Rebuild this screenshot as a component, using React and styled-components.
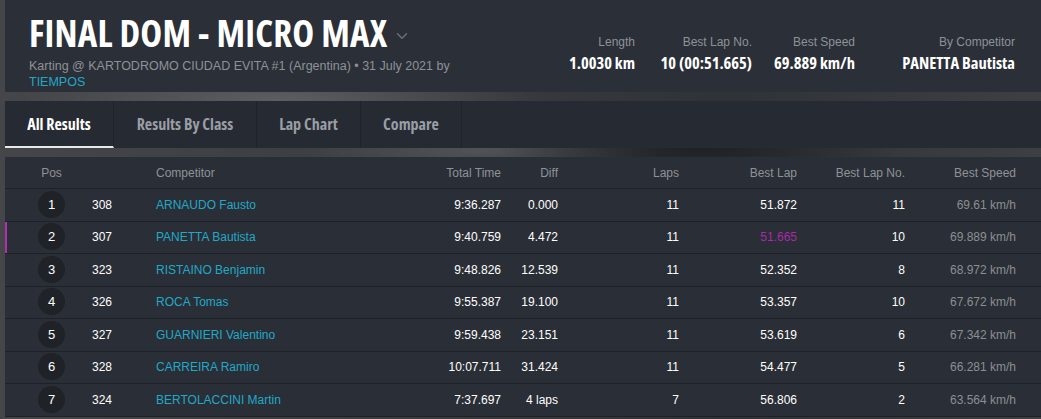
import React from 'react';
import styled, { createGlobalStyle } from 'styled-components';
import { ChevronDown } from 'lucide-react';

const GlobalStyle = createGlobalStyle`
  html, body {
    margin: 0;
    padding: 0;
  }
  body {
    font-family: "Liberation Sans", Arial, sans-serif;
    font-size: 12px;
    color: #fff;
    background-color: #3b3e43;
    background-image:
      radial-gradient(ellipse 260px 40px at 280px 100px, rgba(150, 150, 150, 0.35), transparent),
      radial-gradient(ellipse 200px 30px at 700px 150px, rgba(20, 22, 26, 0.6), transparent),
      radial-gradient(ellipse 180px 30px at 480px 150px, rgba(140, 140, 140, 0.3), transparent),
      linear-gradient(90deg, #44464a 0%, #3a3c40 40%, #2f3236 70%, #3d3f43 100%);
    overflow: hidden;
  }
`;

const Page = styled.div`
  padding-left: 5px;
  width: 1036px;
`;

const Header = styled.header`
  height: 92px;
  background: #2b2f37;
  display: flex;
  justify-content: space-between;
  padding: 0 26px 0 24px;
`;

const TitleBlock = styled.div`
  padding-top: 13px;
`;

const TitleRow = styled.div`
  display: flex;
  align-items: center;
  gap: 6px;
`;

const Title = styled.h1`
  margin: 0;
  font-family: "Open Sans", sans-serif;
  font-stretch: 75%;
  font-weight: 700;
  font-size: 37px;
  line-height: 40px;
  color: #fff;
  letter-spacing: 0.2px;
`;

const Subtitle = styled.div`
  margin-top: 5px;
  color: #8e9298;
  font-size: 12.5px;
  line-height: 16px;
`;

const Link = styled.a`
  color: #21a9c8;
  text-decoration: none;
`;

const Stats = styled.div`
  display: flex;
  padding-top: 35px;
`;

const Stat = styled.div`
  width: ${(p) => p.$w}px;
  text-align: right;
`;

const StatLabel = styled.div`
  color: #8e9298;
  font-size: 12px;
  line-height: 15px;
`;

const StatValue = styled.div`
  margin-top: 3px;
  font-family: "Open Sans", sans-serif;
  font-stretch: 75%;
  font-weight: 700;
  font-size: 16.5px;
  line-height: 20px;
  color: #fff;
`;

const Tabs = styled.nav`
  margin-top: 9px;
  height: 47px;
  background: #262a32;
  display: flex;
`;

const Tab = styled.div`
  width: ${(p) => p.$w}px;
  box-sizing: border-box;
  display: flex;
  align-items: center;
  justify-content: center;
  border-right: 1px solid #1f2228;
  border-bottom: 2px solid ${(p) => (p.$active ? '#e8e8e8' : 'transparent')};
  font-family: "Open Sans", sans-serif;
  font-stretch: 75%;
  font-weight: 700;
  font-size: 16px;
  color: ${(p) => (p.$active ? '#fff' : '#9a9ea5')};
`;

const Table = styled.div`
  margin-top: 9px;
  background: #2a2e36;
`;

const cols = '87px 64px 244px 101px 57px 121px 118px 108px 111px 25px';

const HeadRow = styled.div`
  display: grid;
  grid-template-columns: ${cols};
  height: 31px;
  align-items: center;
  color: #8e9298;
  border-bottom: 1px solid #1e2127;
`;

const Row = styled.div`
  display: grid;
  grid-template-columns: ${cols};
  height: 31.5px;
  align-items: center;
  border-bottom: 1px solid #1e2127;
  box-shadow: ${(p) => (p.$mark ? 'inset 2px 0 0 #b22fb2' : 'none')};
`;

const Cell = styled.div`
  text-align: ${(p) => (p.$right ? 'right' : 'left')};
  color: ${(p) => p.$color || 'inherit'};
  white-space: nowrap;
`;

const PosCell = styled.div`
  padding-left: 33px;
`;

const PosHead = styled.div`
  width: 27px;
  text-align: center;
`;

const PosBadge = styled.div`
  width: 27px;
  height: 27px;
  border-radius: 50%;
  background: #1f2227;
  display: flex;
  align-items: center;
  justify-content: center;
  font-size: 13px;
  margin-top: -1px;
`;

const results = [
  [1, '308', 'ARNAUDO Fausto', '9:36.287', '0.000', '11', '51.872', '11', '69.61 km/h'],
  [2, '307', 'PANETTA Bautista', '9:40.759', '4.472', '11', '51.665', '10', '69.889 km/h'],
  [3, '323', 'RISTAINO Benjamin', '9:48.826', '12.539', '11', '52.352', '8', '68.972 km/h'],
  [4, '326', 'ROCA Tomas', '9:55.387', '19.100', '11', '53.357', '10', '67.672 km/h'],
  [5, '327', 'GUARNIERI Valentino', '9:59.438', '23.151', '11', '53.619', '6', '67.342 km/h'],
  [6, '328', 'CARREIRA Ramiro', '10:07.711', '31.424', '11', '54.477', '5', '66.281 km/h'],
  [7, '324', 'BERTOLACCINI Martin', '7:37.697', '4 laps', '7', '56.806', '2', '63.564 km/h'],
];

export default function App() {
  return (
    <>
      <GlobalStyle />
      <Page>
        <Header>
          <TitleBlock>
            <TitleRow>
              <Title>FINAL DOM - MICRO MAX</Title>
              <ChevronDown size={18} color="#6b6f77" strokeWidth={2} style={{ marginTop: 6 }} />
            </TitleRow>
            <Subtitle>
              Karting @ KARTODROMO CIUDAD EVITA #1 (Argentina) • 31 July 2021 by
              <br />
              <Link>TIEMPOS</Link>
            </Subtitle>
          </TitleBlock>
          <Stats>
            <Stat $w={80}>
              <StatLabel>Length</StatLabel>
              <StatValue>1.0030 km</StatValue>
            </Stat>
            <Stat $w={117}>
              <StatLabel>Best Lap No.</StatLabel>
              <StatValue>10 (00:51.665)</StatValue>
            </Stat>
            <Stat $w={103}>
              <StatLabel>Best Speed</StatLabel>
              <StatValue>69.889 km/h</StatValue>
            </Stat>
            <Stat $w={160}>
              <StatLabel>By Competitor</StatLabel>
              <StatValue>PANETTA Bautista</StatValue>
            </Stat>
          </Stats>
        </Header>

        <Tabs>
          <Tab $w={109} $active>All Results</Tab>
          <Tab $w={143}>Results By Class</Tab>
          <Tab $w={104}>Lap Chart</Tab>
          <Tab $w={101}>Compare</Tab>
        </Tabs>

        <Table>
          <HeadRow>
            <PosCell>
              <PosHead>Pos</PosHead>
            </PosCell>
            <Cell />
            <Cell>Competitor</Cell>
            <Cell $right>Total Time</Cell>
            <Cell $right>Diff</Cell>
            <Cell $right>Laps</Cell>
            <Cell $right>Best Lap</Cell>
            <Cell $right>Best Lap No.</Cell>
            <Cell $right>Best Speed</Cell>
            <Cell />
          </HeadRow>
          {results.map(([pos, num, name, total, diff, laps, best, bestNo, speed]) => (
            <Row key={pos} $mark={pos === 2}>
              <PosCell>
                <PosBadge>{pos}</PosBadge>
              </PosCell>
              <Cell>{num}</Cell>
              <Cell $color="#21a9c8">{name}</Cell>
              <Cell $right>{total}</Cell>
              <Cell $right>{diff}</Cell>
              <Cell $right>{laps}</Cell>
              <Cell $right $color={pos === 2 ? '#a82aa9' : undefined}>{best}</Cell>
              <Cell $right>{bestNo}</Cell>
              <Cell $right $color="#8b8e93">{speed}</Cell>
              <Cell />
            </Row>
          ))}
        </Table>
      </Page>
    </>
  );
}
